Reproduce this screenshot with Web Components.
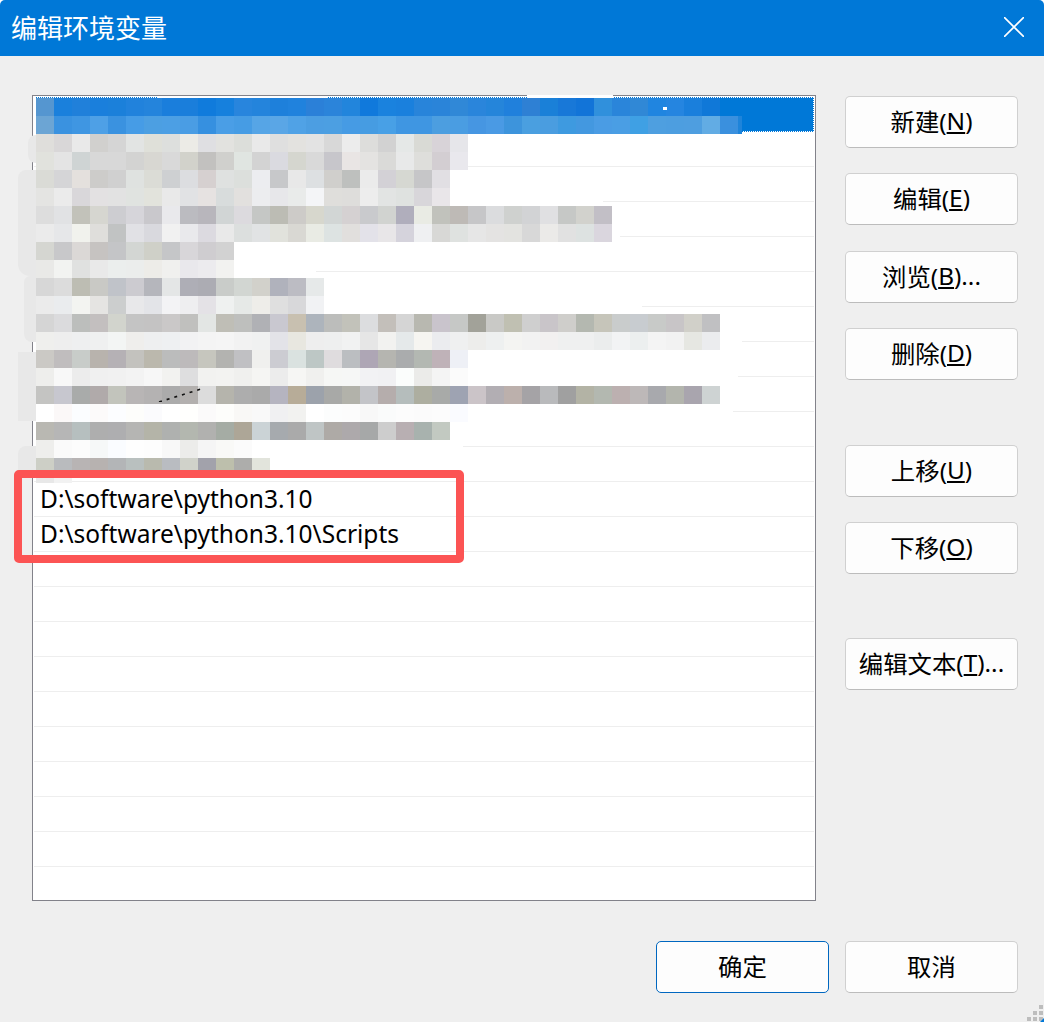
<!DOCTYPE html>
<html lang="zh">
<head>
<meta charset="utf-8">
<title>编辑环境变量</title>
<style>
	html, body { margin: 0; background: #fff; }
	body { font-family: "Noto Sans", "Noto Sans CJK SC", sans-serif; }
</style>
</head>
<body>

<env-dialog>
	<span slot="title">编辑环境变量</span>

	<path-list slot="list">
		<path-row selected></path-row>
		<path-row></path-row>
		<path-row></path-row>
		<path-row></path-row>
		<path-row></path-row>
		<path-row></path-row>
		<path-row></path-row>
		<path-row></path-row>
		<path-row></path-row>
		<path-row></path-row>
		<path-row></path-row>
		<path-row>D:\software\python3.10</path-row>
		<path-row>D:\software\python3.10\Scripts</path-row>
		<path-row></path-row>
		<path-row></path-row>
		<path-row></path-row>
		<path-row></path-row>
		<path-row></path-row>
		<path-row></path-row>
		<path-row></path-row>
		<path-row></path-row>
		<path-row></path-row>
		<path-row></path-row>
	</path-list>

	<button-group slot="side">
		<dialog-button>新建(<u>N</u>)</dialog-button>
		<dialog-button>编辑(<u>E</u>)</dialog-button>
		<dialog-button>浏览(<u>B</u>)...</dialog-button>
		<dialog-button>删除(<u>D</u>)</dialog-button>
	</button-group>
	<button-group slot="side" style="margin-top: 65px">
		<dialog-button>上移(<u>U</u>)</dialog-button>
		<dialog-button>下移(<u>O</u>)</dialog-button>
	</button-group>
	<button-group slot="side" style="margin-top: 64px">
		<dialog-button>编辑文本(<u>T</u>)...</dialog-button>
	</button-group>

	<dialog-button slot="footer" primary>确定</dialog-button>
	<dialog-button slot="footer">取消</dialog-button>
</env-dialog>

<script>
// Mosaic that hides the private entries: one string per 18px band, one colour per 18px cell.
// mask = white width in px that also hides the row line under the smudge
const MOSAIC_ROWS = [
	{ cells: '5596d0 1a80dc 2080da 1a7fdc 1b80da 2182dc 2484dc 1a7edc 1a7edb 107bdc 1680dd 2885dd 2484dc 1e80db 2082dd 2b80d8 2b84da 2285dc 1079dc 1a82de 1a80dd 2884da 2a84d9 3088d7 2a85db 2585da 2080dc 2e80d4 1a80d8 1878d8 1274d8 3090dc 2a85da 3088d6 2085e0 2585e0 1a7fdc 1078d8' },
	{ cells: '6ca5d4 3a92e0 3f96e2 4ea0e6 3a92e0 469ce6 4c9fe2 4c9fe4 4a9de4 3690e0 4a9ee6 469ce4 56a5e6 5aa6e6 50a2e6 4c9ee2 4c9fe2 469be4 469ce2 48a0e6 3f96e2 3f96e2 4c9ee0 4a9de2 4696e2 4a9ae4 3d94dc 4a9fe0 4a9de0 3e9ae0 4398e0 4a9ce4 4a9ee4 3fa0e4 4e9fe0 4d9ee0 4e9ee0 62ace4 3a90de 1e84da', cut: 706 },
	{ cells: 'dfdedb d9d7d8 e9e9e9 d1d0ce d5d5d5 e2e4e3 dfe0d9 dddfdd ecebe6 dfdfe2 e2e2df dcdeda e9e9e9 dfdfdf e3e2df e3e3e3 d8d8d8 ececec dddddb d2d2d2 e5e8e7 d9dad5 d8d3d8 e6e6ea' },
	{ cells: 'e1e2dd e4e4e4 cfd4d4 d8d8d8 d8d8d8 d3d3d2 d8d7d2 d9d9d9 d2d2cb c2c1bf d0d0cd e0e5e1 d3d3d3 dadae0 d5d6cf d9d9d9 c7c6cb e9e5e4 e4e3e1 dadad8 e8e9e9 dededb d3ced2 e9e8ed' },
	{ cells: 'dadbd6 d5d5d7 e4e0dd cdccca d0d0d0 dfe2e0 dbdcd6 ced0d2 dcdde0 d6d0d0 dfe1e0 dcdfdc ecedf0 c7c8ca e8e8e8 dde0e2 d0cfcc bec0be ebebeb d3d1d6 d6d8d2 c6c6c8 e1dfe3' },
	{ cells: 'e4e4e2 ebebeb d9d7da e3e1e2 e2e2e2 e0e3e0 e2e3dc e9e9e9 e1e2e4 e6e2e1 d8dcdc e2e0de ecedef e7e7ea e9ebea f4f5f7 dfdedb dedddb ededed e2e4e3 dfe2e0 d8d6da e9e6e9', mask: 567 },
	{ cells: 'dddddd e1e2e4 c2c2ba d6d6d0 cdcdd1 d6d5da c9c8cc e9e9ec bbbbc0 b8b6bc d1d5d5 dcdade c5c7c5 bcbcb4 cdcbc8 d7d7cd d2d6d5 d5d1d2 c9cacd d1d3d0 b0aebc e9ebe4 c1c2bc bebab6 c6c6c8 dbdcde cfd1cf d2d3d5 e0e0e2 c6c8c6 d2d2cd c2bfc6' },
	{ cells: 'ebebeb e6e7e9 f1f2ed dfdedb c1c3c3 e1e1e5 d9d9de f1f1f1 e9e9ec dcdae0 e9e9e9 dcdfde e1e3e4 e1e2dc d9d8d3 e9ebe4 dde3e2 e1dfdd e3e2e9 e8e6e8 d5d3dc eff0f2 d8d8d6 dfe2e0 e6e6e6 e4e3e2 e3e3e0 d8d8d8 ebeae8 e1e1e1 dde2e1 dad6de', mask: 584 },
	{ cells: 'd5d6d1 c8c8ca dbd8d6 c6c3c1 c4c5c7 d3d6d3 cfd0c8 c5c6c8 d8d6d9 cfcdd0 d2d2d2' },
	{ cells: 'e9e9e7 f2f3f1 e0e1e0 e9e9e9 ebeeed ebedec edece8 f0f0ee e9e8ec ecebee f2f2f0', mask: 280 },
	{ cells: 'd7d7d7 dcdcdc bdbdb3 c9c9c5 c0c3c9 cccbd0 b5b6bc e4e6e6 aeaeb6 acacb3 c9ccc9 d2d6d2 d2d1cb b0b2bc bcbcc3 e6e9e9' },
	{ cells: 'ebebeb eaecee f3f4f1 e5e4e2 cccece e8e8ea e3e4e8 f3f3f5 eeeef0 e4e2e6 eff1f0 e6e9e7 eeede9 dfdfdf d8d8da f1f2f4', mask: 606 },
	{ cells: 'd5d5d5 dbdbdd bcbebc c3bfbf d2d4cd c4c4c4 c4c3c3 cac8c8 c0c0be e3e6e4 bfbeb6 bebfbd b0b1b5 c9c8d0 c8c0b0 adb4bc bcbdbb c2c2ba dcdddf c3bfba d5d5d5 b8b8b0 c9c4cc c6c8c6 a2a299 c9c9c6 c0c0b2 cfcfcf c9c5c9 cfcecb b4b8b0 c6c5ba c9cccc c8ccd0 c8cac8 c8c5c7 d1d0c9 c0c0c2' },
	{ cells: 'efefed eeeeee eeeff0 eff0f0 f3f5f4 efeeec eeeff0 eef0f2 f2f2f3 f4f4f4 f5f5f5 f2f2f2 f0f1f1 e3e3e8 e8e7e0 eeeeee eeefef f1f2f2 e6e6e6 f2f2f0 e5e9ea f6f5f1 ebecef eff0f0 ededeb eef0f0 f4f4f2 f2f2f2 f2f0f0 eff0f0 eff0f0 ebeded f2f3f4 ecefef f4f4f4 f2f2f2 e6e7e2 ebecee', mask: 706 },
	{ cells: 'cbc9c5 c0bdbe c8ccc9 b8b3ad b5b1b5 c3c2be bbb8ad bbbcbc bdbabb c6c6be b3b3b0 c0c0c3 f0f0ee ccccd2 dae2e0 bdc7c5 dfdcde bbbec1 aea6b5 b5b5b0 aaacad b3b8b2 bfb2b8 eef0f6' },
	{ cells: 'eeeeec f8f8f8 ececec f0f0f0 f1f1f1 f3f3f3 f7f7f7 f2f2f0 dededf f2f2f0 f3f3f1 f0f0ee f5f5f3 ececec f6f6f4 f0f0ee f6f7f5 f6f7f6 f2f2f4 f1f1f3 fbfdfc ebebe9 f4f4f4 fbfbfb', mask: 702 },
	{ cells: 'c4c4c2 c7c7cf a9abaa b0aaaa c2c4bc b8b5b5 b4b2b2 ababab b3b0ae dcdcdc b5b4ac adadad aaaaaa b5b4c0 b7ac98 9ca2ab a8a9a7 b2b2aa c3c4c8 b5adac b5bdbc adaea0 a8aaa8 9ea3b2 cbc4c8 b2aeb3 bcb0ac a5a3a6 b9babc a0a0a0 b3b3a5 b3b8b0 bcb0b0 bdb8b8 a8a9ad b3b5ad a9a5ae ced3d3' },
	{ cells: 'ffffff fbf8f8 fbfdff fcfafa fcfdff fdfdfb fbfbfd ffffff fffffd fbfafa fdfdfb f9f8f6 f9f9f9 f0f0f2 f2f2f0 ffffff fcfdfd fcfcfc f8f8f8 fafbfb fcfcfc fbfbfb fcfcfc fafbff', mask: 697 },
	{ cells: 'b9b8b2 b6b6b6 b6bfbf aeaeae aeaeb0 b5b5b3 b4b4a8 afb1af b3b7af b1b1af a5aca4 ada697 cbd3d6 a6aaae aaaaaa bfc5c5 aeaaa6 ada9ab a6a8a8 cdcdcd b8afb2 a8b2ae c2c9c1' },
	{ cells: 'eeeeec fafafa fcfcfc f6f8f8 fafcff fefefe fdfdfd f8f8f8 ececea f5f5f5 f9f9f7 fbfbfb', mask: 427 },
	{ cells: 'cdcfc6 b9bbbe b8b4b4 b7b2b0 b3b5b7 b9c0bf b9baae b9bcc1 d0d2ca a2a2ab bdbfac adadab e2e4dc' },
	{ cells: 'e8e8e8 f2f2f2', height: 7 }
];

class PixelMosaic extends HTMLElement {

	constructor() {
		super();
		this.root = this.attachShadow({mode: 'open'});
		this.root.innerHTML = `
			<style>
				:host { display: block; }
				.band { display: flex; height: 18px; overflow: hidden; width: max-content; background: #fff; }
				.band i { flex: none; width: 18px; }
			</style>
			${MOSAIC_ROWS.map(row => {
				let style = '';
				if (row.cut) style += `width:${row.cut}px;`;
				if (row.mask) style += `width:${row.mask}px;`;
				if (row.height) style += `height:${row.height}px;`;
				const cells = row.cells.split(' ').map(c => `<i style="background:#${c}"></i>`).join('');
				return `<div class="band" style="${style}">${cells}</div>`;
			}).join('')}
		`;
	}

}

class PathRow extends HTMLElement {

	constructor() {
		super();
		this.root = this.attachShadow({mode: 'open'});
		this.root.innerHTML = `
			<style>
				:host {
					display: block;
					box-sizing: border-box;
					height: 35px;
					padding-left: 6px;
					border-bottom: 1px solid #eeeeee;
					font-size: 24.5px;
					line-height: 34px;
					color: #000;
					white-space: nowrap;
				}
				:host([selected]) {
					background: #0078d7;
					border-bottom-color: #0078d7;
					outline: 1px dotted #fff;
					outline-offset: -1px;
				}
			</style>
			<slot></slot>
		`;
	}

}

class PathList extends HTMLElement {

	constructor() {
		super();
		this.root = this.attachShadow({mode: 'open'});
		this.root.innerHTML = `
			<style>
				:host {
					display: block;
					position: relative;
					box-sizing: border-box;
					width: 784px;
					height: 806px;
					border: 1px solid #82828a;
					background: #fff;
				}
				.rows { height: 804px; padding: 1px; box-sizing: border-box; overflow: hidden; }
				.over { position: absolute; }
				pixel-mosaic { position: absolute; left: 3px; top: 2px; }
				.smudge { background: #e8e8e8; }
				.wipe { background: #fff; }
				.scratch { position: absolute; left: 120px; top: 290px; display: block; }
				.frame {
					position: absolute;
					left: -19px;
					top: 374px;
					width: 450px;
					height: 93px;
					box-sizing: border-box;
					border: 8px solid #fc5454;
					border-radius: 5px;
				}
			</style>
			<div class="rows"><slot></slot></div>
			<div class="over smudge" style="left:-5px;top:39px;width:8px;height:28px;border-radius:8px 0 0 8px"></div>
			<div class="over smudge" style="left:-15px;top:74px;width:18px;height:106px;border-radius:8px 0 0 12px"></div>
			<div class="over smudge" style="left:-9px;top:180px;width:12px;height:66px;border-radius:6px 0 0 8px"></div>
			<div class="over smudge" style="left:-15px;top:256px;width:18px;height:69px"></div>
			<div class="over smudge" style="left:-15px;top:350px;width:18px;height:30px;border-radius:8px 0 0 0"></div>
			<div class="over wipe" style="left:0;top:0;width:3px;height:38px"></div>
			<div class="over wipe" style="left:124px;top:1px;width:171px;height:1px"></div>
			<div class="over wipe" style="left:494px;top:-1px;width:86px;height:3px"></div>
			<pixel-mosaic></pixel-mosaic>
			<div class="over wipe" style="left:630px;top:11px;width:4px;height:3px"></div>
			<svg class="scratch" width="50" height="16" viewBox="0 0 50 16">
				<path d="M6 16L48 3" stroke="#111" stroke-width="1.6" stroke-dasharray="3 5" fill="none"/>
			</svg>
			<div class="frame"></div>
		`;
	}

}

class ButtonGroup extends HTMLElement {

	constructor() {
		super();
		this.root = this.attachShadow({mode: 'open'});
		this.root.innerHTML = `
			<style>
				:host { display: flex; flex-direction: column; gap: 25.33px; }
			</style>
			<slot></slot>
		`;
	}

}

class DialogButton extends HTMLElement {

	constructor() {
		super();
		this.root = this.attachShadow({mode: 'open'});
		this.root.innerHTML = `
			<style>
				:host {
					display: flex;
					align-items: center;
					justify-content: center;
					box-sizing: border-box;
					width: 173px;
					height: 52px;
					padding-bottom: 3px;
					background: #fdfdfd;
					border: 1px solid #d0d0d0;
					border-bottom-color: #bcbcbc;
					border-radius: 5px;
					font-size: 24.4px;
					color: #000;
					white-space: nowrap;
				}
				:host([primary]) {
					border-color: #0067c0;
				}
			</style>
			<slot></slot>
		`;
	}

}

class EnvDialog extends HTMLElement {

	constructor() {
		super();
		this.root = this.attachShadow({mode: 'open'});
		this.root.innerHTML = `
			<style>
				:host {
					display: flex;
					flex-direction: column;
					position: relative;
					width: 1044px;
					height: 1022px;
					overflow: hidden;
					background: #efefef;
					border-radius: 5px 5px 0 0;
				}
				.title {
					flex: none;
					display: flex;
					align-items: center;
					justify-content: space-between;
					box-sizing: border-box;
					height: 56px;
					padding: 0 20px 2px 11px;
					background: #0078d7;
					color: #fff;
					font-size: 26px;
				}
				.title svg { display: block; }
				.main {
					display: flex;
					justify-content: space-between;
					padding: 39px 26px 0 32px;
				}
				.side { padding-top: 1px; width: 173px; }
				.footer {
					display: flex;
					justify-content: flex-end;
					gap: 16px;
					padding: 40px 26px 0 0;
				}
				.grip { position: absolute; right: 0; bottom: 0; display: block; }
			</style>
			<div class="title">
				<slot name="title"></slot>
				<svg width="20" height="20" viewBox="0 0 20 20">
					<path d="M0 0L20 20M20 0L0 20" stroke="#fff" stroke-width="1.6" fill="none"/>
				</svg>
			</div>
			<div class="main">
				<slot name="list"></slot>
				<div class="side"><slot name="side"></slot></div>
			</div>
			<div class="footer"><slot name="footer"></slot></div>
			<svg class="grip" width="17" height="17" viewBox="0 0 17 17" fill="#bdbdbd">
				<rect x="12" y="0" width="4" height="4"/>
				<rect x="6" y="6" width="4" height="4"/>
				<rect x="12" y="6" width="4" height="4"/>
				<rect x="0" y="12" width="4" height="4"/>
				<rect x="6" y="12" width="4" height="4"/>
				<rect x="12" y="12" width="4" height="4"/>
				<path d="M17 13V17H13Z" fill="#0078d7"/>
			</svg>
		`;
	}

}

customElements.define('pixel-mosaic', PixelMosaic);
customElements.define('path-row', PathRow);
customElements.define('path-list', PathList);
customElements.define('button-group', ButtonGroup);
customElements.define('dialog-button', DialogButton);
customElements.define('env-dialog', EnvDialog);
</script>
</body>
</html>
